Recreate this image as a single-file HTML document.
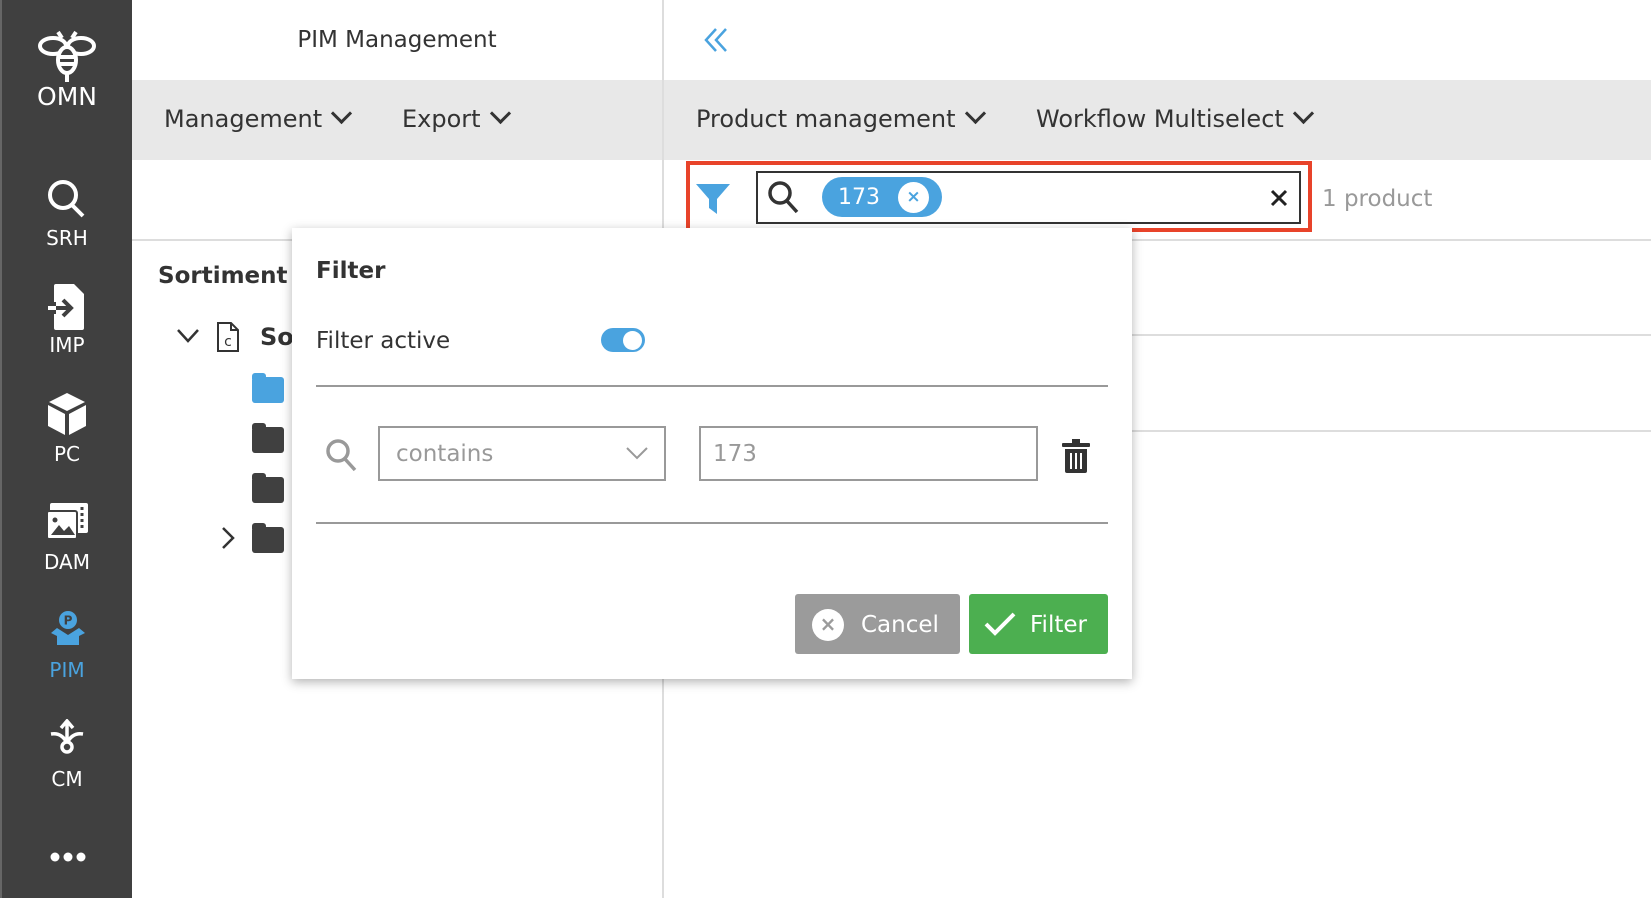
<!DOCTYPE html>
<html><head><meta charset="utf-8"><style>
*{margin:0;padding:0;box-sizing:border-box}
body{width:1651px;height:898px;overflow:hidden;background:#fff;font-family:"DejaVu Sans","Liberation Sans",sans-serif;color:#333;position:relative}
.a{position:absolute}
.sb{left:0;top:0;width:132px;height:898px;background:#404040;border-left:2px solid #666}
.sl{position:absolute;left:0;width:130px;text-align:center;color:#fff;font-size:20px}
.menu{font-size:24px;color:#333;position:absolute;top:105px;white-space:nowrap}
.chev{display:inline-block;width:15px;height:15px;border-right:3px solid #333;border-bottom:3px solid #333;transform:rotate(45deg);margin-left:12px;position:relative;top:-6px}
.folder{position:absolute;left:252px;width:32px;height:26px;background:#404040;border-radius:3px}
.folder:before{content:"";position:absolute;left:0;top:-4px;width:14px;height:6px;background:inherit;border-radius:3px 3px 0 0}
</style></head><body>
<div class="a sb">
<svg class="a" style="left:34px;top:26px" width="62" height="56" viewBox="0 0 62 56" fill="none" stroke="#fff" stroke-width="4"><ellipse cx="17" cy="20" rx="13" ry="8"/><ellipse cx="45" cy="20" rx="13" ry="8"/><path d="M22 6l4 6M40 6l-4 6"/><ellipse cx="31" cy="34" rx="9" ry="13" fill="#404040"/><path d="M23 31h16M23 38h16M31 47v9"/></svg>
<div class="sl" style="top:82px;font-size:25px">OMN</div>
<svg class="a" style="left:44px;top:178px" width="42" height="42" viewBox="0 0 42 42" fill="none" stroke="#fff" stroke-width="4"><circle cx="17" cy="17" r="13"/><path d="M26 27l11 11"/></svg>
<div class="sl" style="top:226px">SRH</div>
<svg class="a" style="left:44px;top:284px" width="44" height="46" viewBox="0 0 44 46"><path d="M10 0h18l10 10v34a2 2 0 0 1-2 2H10a2 2 0 0 1-2-2V30h2V18H8V2a2 2 0 0 1 2-2z" fill="#fff"/><path d="M2 24h22M17 16l8 8-8 8" stroke="#404040" stroke-width="4" fill="none"/><path d="M2 24h8" stroke="#fff" stroke-width="4"/></svg>
<div class="sl" style="top:333px">IMP</div>
<svg class="a" style="left:46px;top:393px" width="38" height="42" viewBox="0 0 38 42" fill="#fff"><path d="M19 0l18 9-18 9L1 9z"/><path d="M0 12l17 9v21L0 33zM38 12l-17 9v21l17-9z"/></svg>
<div class="sl" style="top:442px">PC</div>
<svg class="a" style="left:45px;top:503px" width="42" height="36" viewBox="0 0 42 36"><rect x="3" y="0" width="38" height="30" rx="2" fill="#fff"/><rect x="0" y="8" width="30" height="28" rx="2" fill="#fff" stroke="#404040" stroke-width="2"/><path d="M4 32l8-10 5 6 5-5 6 9z" fill="#404040"/><circle cx="8" cy="17" r="2.5" fill="#404040"/><path d="M35 4v22" stroke="#404040" stroke-width="3" stroke-dasharray="3 3"/></svg>
<div class="sl" style="top:550px">DAM</div>
<svg class="a" style="left:49px;top:611px" width="34" height="36" viewBox="0 0 34 36" fill="#4aa3df"><circle cx="17" cy="9" r="9"/><text x="17" y="13.5" font-size="12" font-weight="bold" text-anchor="middle" fill="#404040" font-family="DejaVu Sans">P</text><path d="M0 22l6-5 11 7 11-7 6 5-6 3v9H6v-9z"/></svg>
<div class="sl" style="top:658px;color:#4aa3df">PIM</div>
<svg class="a" style="left:47px;top:719px" width="36" height="36" viewBox="0 0 36 36" fill="none" stroke="#fff" stroke-width="3.5"><path d="M18 24V4M12 9l6-7 6 7"/><path d="M18 24C14 16 8 14 2 15M18 24c4-8 10-10 16-9"/><circle cx="18" cy="28" r="5" fill="#404040"/></svg>
<div class="sl" style="top:767px">CM</div>
<svg class="a" style="left:48px;top:852px" width="36" height="10" viewBox="0 0 36 10" fill="#fff"><circle cx="5" cy="5" r="4.5"/><circle cx="18" cy="5" r="4.5"/><circle cx="31" cy="5" r="4.5"/></svg>
</div>

<div class="a" style="left:132px;top:80px;width:1519px;height:80px;background:#e8e8e8"></div>
<div class="a" style="left:662px;top:0;width:2px;height:898px;background:#ddd"></div>
<div class="a" style="left:132px;top:239px;width:530px;height:2px;background:#ddd"></div>
<div class="a" style="left:664px;top:239px;width:987px;height:2px;background:#ddd"></div>
<div class="a" style="left:664px;top:334px;width:987px;height:2px;background:#ddd"></div>
<div class="a" style="left:664px;top:430px;width:987px;height:2px;background:#ddd"></div>

<div class="a" style="left:132px;top:27px;width:530px;text-align:center;font-size:23px">PIM Management</div>
<svg class="a" style="left:703px;top:27px" width="26" height="26" viewBox="0 0 26 26" fill="none" stroke="#4aa3df" stroke-width="2.5"><path d="M13 2L3 13l10 11M23 2L13 13l10 11"/></svg>
<div class="menu" style="left:164px">Management<span class="chev"></span></div>
<div class="menu" style="left:402px">Export<span class="chev"></span></div>
<div class="menu" style="left:696px">Product management<span class="chev"></span></div>
<div class="menu" style="left:1036px">Workflow Multiselect<span class="chev"></span></div>

<div class="a" style="left:686px;top:161px;width:626px;height:71px;border:4px solid #e8432a"></div>
<svg class="a" style="left:696px;top:184px" width="34" height="30" viewBox="0 0 34 30"><path d="M0 0h34L21 15v15l-8-6v-9z" fill="#4aa3df"/></svg>
<div class="a" style="left:756px;top:171px;width:545px;height:53px;border:2px solid #333"></div>
<svg class="a" style="left:767px;top:180px" width="34" height="34" viewBox="0 0 34 34" fill="none" stroke="#333" stroke-width="3.5"><circle cx="13" cy="13" r="10"/><path d="M20 21l10 11"/></svg>
<div class="a" style="left:822px;top:177px;width:120px;height:40px;border-radius:20px;background:#4aa3df;color:#fff;font-size:22px;line-height:42px;padding-left:16px">173</div>
<div class="a" style="left:898px;top:182px;width:31px;height:31px;border-radius:50%;background:#fff;color:#4aa3df;font-size:17px;font-weight:bold;text-align:center;line-height:30px">×</div>
<svg class="a" style="left:1270px;top:189px" width="18" height="18" viewBox="0 0 18 18" stroke="#222" stroke-width="3"><path d="M2 2l14 14M16 2L2 16"/></svg>
<div class="a" style="left:1322px;top:186px;font-size:23px;color:#999">1 product</div>

<div class="a" style="left:158px;top:263px;font-size:23px;font-weight:bold">Sortiment</div>
<svg class="a" style="left:176px;top:328px" width="24" height="16" viewBox="0 0 24 16" fill="none" stroke="#333" stroke-width="2.5"><path d="M2 2l10 11L22 2"/></svg>
<svg class="a" style="left:217px;top:322px" width="22" height="30" viewBox="0 0 22 30" fill="none" stroke="#333" stroke-width="2"><path d="M1 1h13l7 7v21H1z M14 1v7h7"/><text x="11" y="24" font-size="14" text-anchor="middle" fill="#333" stroke="none" font-family="DejaVu Sans">c</text></svg>
<div class="a" style="left:260px;top:323px;font-size:24px;font-weight:bold">So</div>
<div class="folder" style="top:377px;background:#4aa3df"></div>
<div class="folder" style="top:427px"></div>
<div class="folder" style="top:477px"></div>
<div class="folder" style="top:527px"></div>
<svg class="a" style="left:220px;top:526px" width="16" height="24" viewBox="0 0 16 24" fill="none" stroke="#333" stroke-width="2.5"><path d="M3 2l10 10L3 22"/></svg>

<div class="a" style="left:292px;top:228px;width:840px;height:451px;background:#fff;box-shadow:0 3px 10px rgba(0,0,0,.3)">
<div class="a" style="left:24px;top:30px;font-size:23px;font-weight:bold">Filter</div>
<div class="a" style="left:24px;top:100px;font-size:23px">Filter active</div>
<div class="a" style="left:309px;top:100px;width:44px;height:24px;border-radius:12px;background:#4aa3df"></div>
<div class="a" style="left:331px;top:103px;width:19px;height:19px;border-radius:50%;background:#fff"></div>
<div class="a" style="left:24px;top:157px;width:792px;height:2px;background:#999"></div>
<svg class="a" style="left:33px;top:210px" width="34" height="34" viewBox="0 0 34 34" fill="none" stroke="#999" stroke-width="3.5"><circle cx="13" cy="13" r="10"/><path d="M20 21l10 11"/></svg>
<div class="a" style="left:86px;top:198px;width:288px;height:55px;border:2px solid #999;font-size:23px;color:#999;line-height:53px;padding-left:16px">contains</div>
<svg class="a" style="left:334px;top:219px" width="22" height="14" viewBox="0 0 22 14" fill="none" stroke="#999" stroke-width="2"><path d="M1 1l10 10L21 1"/></svg>
<div class="a" style="left:407px;top:198px;width:339px;height:55px;border:2px solid #999;font-size:23px;color:#999;line-height:53px;padding-left:12px">173</div>
<svg class="a" style="left:770px;top:211px" width="28" height="34" viewBox="0 0 28 34" fill="#333"><rect x="0" y="4" width="28" height="4" rx="1"/><rect x="10" y="0" width="8" height="5"/><path d="M3 10h22v22a2 2 0 0 1-2 2H5a2 2 0 0 1-2-2z"/><path d="M9 14v16M14 14v16M19 14v16" stroke="#fff" stroke-width="2"/></svg>
<div class="a" style="left:24px;top:294px;width:792px;height:2px;background:#999"></div>
<div class="a" style="left:503px;top:366px;width:165px;height:60px;border-radius:3px;background:#9b9b9b;color:#fff;font-size:23px;line-height:62px;padding-left:66px">Cancel</div>
<div class="a" style="left:520px;top:381px;width:32px;height:32px;border-radius:50%;background:#fff;color:#9b9b9b;font-weight:bold;font-size:20px;text-align:center;line-height:31px">×</div>
<div class="a" style="left:677px;top:366px;width:139px;height:60px;border-radius:3px;background:#4caf50;color:#fff;font-size:23px;line-height:62px;padding-left:61px">Filter</div>
<svg class="a" style="left:692px;top:384px" width="32" height="24" viewBox="0 0 32 24" fill="none" stroke="#fff" stroke-width="4"><path d="M2 12l9 9L30 2"/></svg>
</div>
</body></html>
